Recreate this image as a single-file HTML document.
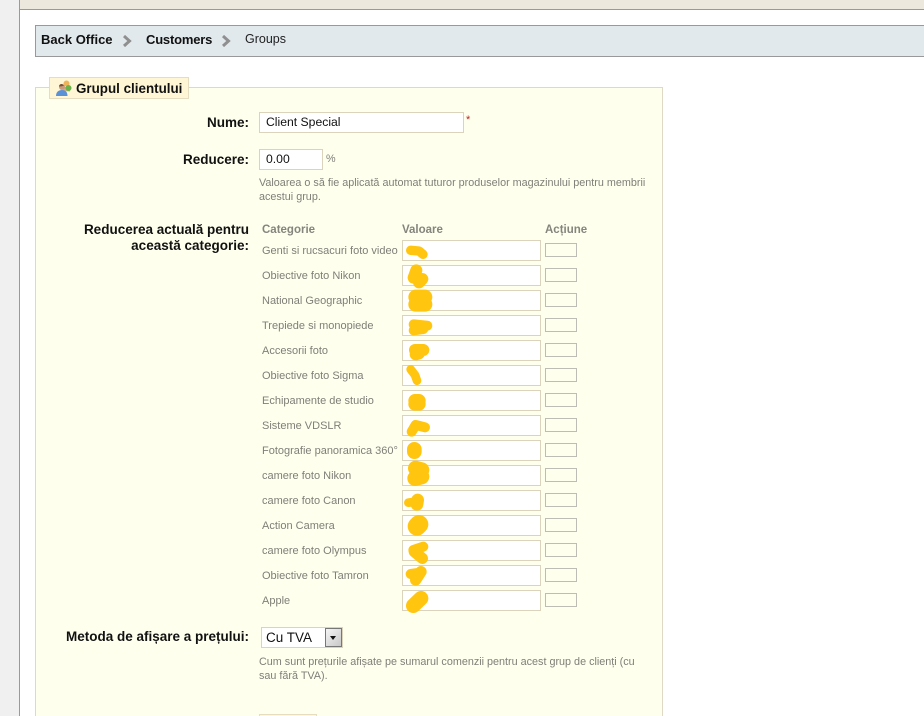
<!DOCTYPE html>
<html><head><meta charset="utf-8"><style>
html,body{margin:0;padding:0;width:924px;height:716px;overflow:hidden;background:#fff}
body{position:relative;font-family:"Liberation Sans",Arial,sans-serif}
.a{position:absolute;white-space:nowrap}
.l{position:absolute;left:40px;width:209px;text-align:right;font-weight:bold;font-size:13.5px;color:#111;line-height:15px}
.g{position:absolute;font-size:10.8px;color:#7f7f78;line-height:14px;white-space:nowrap}
.c{position:absolute;left:262px;font-size:11px;color:#7f7f78;line-height:14px;white-space:nowrap;margin-top:1px}
.h{position:absolute;top:223px;font-size:11.5px;font-weight:bold;color:#85857d;line-height:14px}
.i{position:absolute;box-sizing:border-box;background:#fff;border:1px solid #dcd3bd;left:402px;width:139px;height:21px}
.b{position:absolute;box-sizing:border-box;background:#ffffee;border:1px solid #bdbdb5;left:545px;width:32px;height:14px}
</style></head><body>
<div class="a" style="left:0;top:0;width:19px;height:716px;background:#f0f0f0"></div>
<div class="a" style="left:19px;top:0;width:1px;height:716px;background:#9a9a9a"></div>
<div class="a" style="left:20px;top:0;width:904px;height:9px;background:#ece8dd;border-bottom:1px solid #999"></div>
<div class="a" style="left:35px;top:25px;width:889px;height:30px;background:#e1e9ec;border:1px solid #999;border-right:0;box-sizing:content-box"></div>
<div class="a" style="left:41px;top:32px;font-size:13px;font-weight:bold;color:#111;line-height:15px">Back Office</div>
<svg class="a" style="left:122px;top:35px" width="12" height="12"><path d="M2 1L7.500 6L2 11" fill="none" stroke="#8f8f8f" stroke-width="3"/></svg>
<div class="a" style="left:146px;top:32px;font-size:13px;letter-spacing:-.2px;font-weight:bold;color:#111;line-height:15px">Customers</div>
<svg class="a" style="left:221px;top:35px" width="12" height="12"><path d="M2 1L7.500 6L2 11" fill="none" stroke="#8f8f8f" stroke-width="3"/></svg>
<div class="a" style="left:245px;top:32px;font-size:12.5px;color:#222;line-height:15px">Groups</div>

<div class="a" style="left:35px;top:87px;width:628px;height:640px;background:#ffffee;border:1px solid #dfd8c5;box-sizing:border-box"></div>
<div class="a" style="left:49px;top:77px;width:140px;height:22px;background:#fff6d6;border:1px solid #e6dcc0;box-sizing:border-box"></div>
<svg class="a" style="left:55px;top:79px" width="18" height="18" viewBox="0 0 18 18">
<circle cx="11.500" cy="4.500" r="3" fill="#eeb45c"/><path d="M8 12c0-3 2-4.500 4-4.500s3 1 3 3v2z" fill="#d8b070"/>
<circle cx="13.500" cy="9" r="3" fill="#6cb24a"/>
<circle cx="7" cy="8" r="3" fill="#c89a7a"/><path d="M7 5c-2 0-3 1-3 2.500 2 0 4-.5 5-1z" fill="#7a5236"/>
<path d="M1 17c0-4 2.500-6 6-6s5.500 2 5.500 6z" fill="#5a92d8"/></svg>
<div class="a" style="left:76px;top:81px;font-size:13.4px;font-weight:bold;color:#111;line-height:16px">Grupul clientului</div>

<div class="l" style="top:115px">Nume:</div>
<div class="a" style="left:259px;top:112px;width:205px;height:21px;box-sizing:border-box;background:#fff;border:1px solid #dcd3bd"></div>
<div class="a" style="left:266px;top:115px;font-size:12.2px;color:#111;line-height:15px">Client Special</div>
<div class="a" style="left:466px;top:114px;font-size:11px;color:#b22;line-height:12px">*</div>

<div class="l" style="top:152px">Reducere:</div>
<div class="a" style="left:259px;top:149px;width:64px;height:21px;box-sizing:border-box;background:#fff;border:1px solid #dcd3bd"></div>
<div class="a" style="left:266px;top:152px;font-size:12.2px;color:#111;line-height:15px">0.00</div>
<div class="g" style="left:326px;top:152px">%</div>
<div class="g" style="left:259px;top:176px">Valoarea o să fie aplicată automat tuturor produselor magazinului pentru membrii</div>
<div class="g" style="left:259px;top:190px">acestui grup.</div>

<div class="l" style="top:222px">Reducerea actuală pentru</div>
<div class="l" style="top:238px">această categorie:</div>
<div class="h" style="left:262px">Categorie</div>
<div class="h" style="left:402px">Valoare</div>
<div class="h" style="left:545px">Acțiune</div>

<div class="c" style="top:243px">Genti si rucsacuri foto video</div><div class="i" style="top:240px"></div><div class="b" style="top:243px"></div>
<div class="c" style="top:268px">Obiective foto Nikon</div><div class="i" style="top:265px"></div><div class="b" style="top:268px"></div>
<div class="c" style="top:293px">National Geographic</div><div class="i" style="top:290px"></div><div class="b" style="top:293px"></div>
<div class="c" style="top:318px">Trepiede si monopiede</div><div class="i" style="top:315px"></div><div class="b" style="top:318px"></div>
<div class="c" style="top:343px">Accesorii foto</div><div class="i" style="top:340px"></div><div class="b" style="top:343px"></div>
<div class="c" style="top:368px">Obiective foto Sigma</div><div class="i" style="top:365px"></div><div class="b" style="top:368px"></div>
<div class="c" style="top:393px">Echipamente de studio</div><div class="i" style="top:390px"></div><div class="b" style="top:393px"></div>
<div class="c" style="top:418px">Sisteme VDSLR</div><div class="i" style="top:415px"></div><div class="b" style="top:418px"></div>
<div class="c" style="top:443px">Fotografie panoramica 360°</div><div class="i" style="top:440px"></div><div class="b" style="top:443px"></div>
<div class="c" style="top:468px">camere foto Nikon</div><div class="i" style="top:465px"></div><div class="b" style="top:468px"></div>
<div class="c" style="top:493px">camere foto Canon</div><div class="i" style="top:490px"></div><div class="b" style="top:493px"></div>
<div class="c" style="top:518px">Action Camera</div><div class="i" style="top:515px"></div><div class="b" style="top:518px"></div>
<div class="c" style="top:543px">camere foto Olympus</div><div class="i" style="top:540px"></div><div class="b" style="top:543px"></div>
<div class="c" style="top:568px">Obiective foto Tamron</div><div class="i" style="top:565px"></div><div class="b" style="top:568px"></div>
<div class="c" style="top:593px">Apple</div><div class="i" style="top:590px"></div><div class="b" style="top:593px"></div>

<svg class="a" style="left:395px;top:235px" width="190" height="380" viewBox="0 0 570 1140">
<g fill="none" stroke="#ffc50f" stroke-linecap="round" stroke-linejoin="round">
<path stroke-width="28" d="M47 46L72 48L84 58"/>
<path stroke-width="36" d="M64 106L56 128L82 132L72 142"/>
<path stroke-width="44" d="M62 186L90 186M62 208L90 208"/>
<path stroke-width="30" d="M56 268L97 272M56 286L85 282"/>
<path stroke-width="36" d="M60 345L85 345M62 358L72 355"/>
<path stroke-width="26" d="M47 403L60 420L66 437"/>
<path stroke-width="40" d="M60 497L72 497M60 507L72 507"/>
<path stroke-width="30" d="M50 590L62 570L90 577"/>
<path stroke-width="44" d="M58 643L58 650"/>
<path stroke-width="46" d="M62 700L80 705M60 730L80 725"/>
<path stroke-width="38" d="M68 795L66 808"/>
<path stroke-width="26" d="M40 803L60 800"/>
<path stroke-width="56" d="M72 868L66 874"/>
<path stroke-width="30" d="M55 945L85 935"/>
<path stroke-width="34" d="M58 950L82 970"/>
<path stroke-width="30" d="M47 1017L75 1013"/>
<path stroke-width="34" d="M62 1035L78 1010"/>
<path stroke-width="44" d="M55 1112L78 1090"/>
</g></svg>

<div class="l" style="left:40px;top:629px">Metoda de afișare a prețului:</div>
<div class="a" style="left:261px;top:627px;width:82px;height:21px;box-sizing:border-box;background:#fff;border:1px solid #dcd3bd"></div>
<div class="a" style="left:266px;top:629px;font-size:13.5px;color:#111;line-height:17px">Cu TVA</div>
<div class="a" style="left:325px;top:628px;width:17px;height:19px;box-sizing:border-box;background:linear-gradient(135deg,#f4f4f4,#c8c8c8);border:1px solid #777"></div>
<div class="a" style="left:330px;top:636px;width:0;height:0;border-left:3.500px solid transparent;border-right:3.500px solid transparent;border-top:4px solid #111"></div>
<div class="g" style="left:259px;top:655px">Cum sunt prețurile afișate pe sumarul comenzii pentru acest grup de clienți (cu</div>
<div class="g" style="left:259px;top:669px">sau fără TVA).</div>
<div class="a" style="left:259px;top:714px;width:58px;height:4px;background:#fff6d6;border:1px solid #e6dcc0;box-sizing:border-box"></div>
</body></html>
